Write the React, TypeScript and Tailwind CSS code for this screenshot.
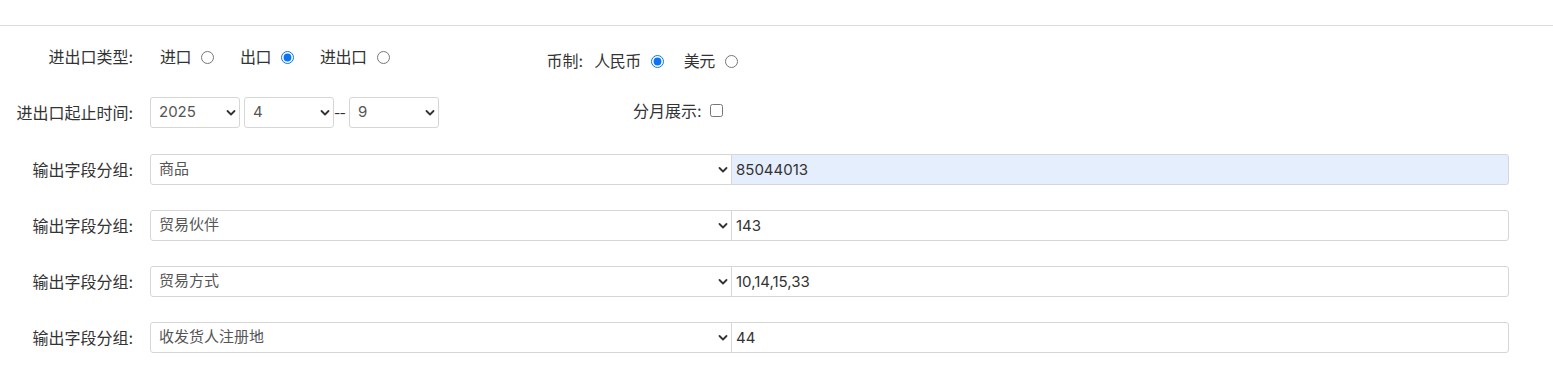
const font = "font-['Inter','Noto_Sans_CJK_SC',sans-serif]";

const Chevron = () => (
    <svg className="pointer-events-none absolute right-[4px] top-1/2 -translate-y-1/2" width="10" height="7" viewBox="0 0 10 7" fill="none">
        <path d="M1.5 1.5 L5 5 L8.5 1.5" stroke="#333" strokeWidth="1.8" strokeLinecap="round" strokeLinejoin="round" />
    </svg>
);

const Select = ({ value, className }: { value: string; className: string }) => (
    <div className={`relative h-[31px] shrink-0 ${className}`}>
        <select
            defaultValue={value}
            className="h-full w-full appearance-none rounded-l-[3px] border border-[#d6d6d6] bg-white pl-[8px] text-[15px] text-[#555] outline-none"
        >
            <option>{value}</option>
        </select>
        <Chevron />
    </div>
);

const Radio = ({ label, checked, gap }: { label: string; checked?: boolean; gap: string }) => (
    <label className={`flex items-center ${gap}`}>
        <span className="tracking-[-0.5px]">{label}</span>
        <input type="radio" defaultChecked={checked} name={label} className="m-0 ml-[10px] h-[13px] w-[13px] accent-[#0a74f5]" />
    </label>
);

const groups = [
    { name: '商品', value: '85044013', filled: true },
    { name: '贸易伙伴', value: '143' },
    { name: '贸易方式', value: '10,14,15,33' },
    { name: '收发货人注册地', value: '44' },
];

export default function App() {
    return (
        <div className={`min-h-[369px] w-full bg-white text-[16px] text-[#333] ${font}`}>
            <div className="h-[26px] border-b border-[#dcdcdc]" />

            {/* 类型 / 币制 */}
            <div className="mt-[20px] flex items-start">
                <div className="flex h-[22px] items-center">
                    <div className="w-[133px] text-right">进出口类型:</div>
                    <div className="ml-[27px] flex items-center">
                        <Radio label="进口" gap="" />
                        <Radio label="出口" checked gap="ml-[26px]" />
                        <Radio label="进出口" gap="ml-[26px]" />
                    </div>
                </div>
                <div className="ml-[157px] mt-[4px] flex h-[22px] items-center">
                    <span>币制:</span>
                    <div className="ml-[11px] flex items-center">
                        <Radio label="人民币" checked gap="" />
                        <Radio label="美元" gap="ml-[20px]" />
                    </div>
                </div>
            </div>

            {/* 起止时间 */}
            <div className="mt-[25px] flex h-[31px] items-center">
                <div className="w-[133px] text-right">进出口起止时间:</div>
                <div className="ml-[17px] flex items-center">
                    <Select value="2025" className="w-[90px] [&_select]:rounded-[3px]" />
                    <Select value="4" className="ml-[4px] w-[90px] [&_select]:rounded-[3px]" />
                    <span className="inline-block w-[10px] whitespace-nowrap text-[14px] tracking-[-1px] text-[#333]">--</span>
                    <Select value="9" className="ml-[5px] w-[90px] [&_select]:rounded-[3px]" />
                </div>
                <div className="ml-[194px] flex -translate-y-[2px] items-center">
                    <span>分月展示:</span>
                    <input type="checkbox" className="m-0 ml-[8px] h-[13px] w-[13px]" />
                </div>
            </div>

            {/* 输出字段分组 */}
            <div className="mt-[26px] flex flex-col gap-[25px]">
                {groups.map((g) => (
                    <div key={g.name} className="flex h-[31px] items-center">
                        <div className="w-[133px] text-right">输出字段分组:</div>
                        <div className="ml-[17px] flex">
                            <Select value={g.name} className="w-[582px]" />
                            <input
                                defaultValue={g.value}
                                className={`-ml-px h-[31px] w-[778px] rounded-r-[3px] border border-[#d6d6d6] px-[4px] text-[15px] text-[#333] outline-none ${g.filled ? 'bg-[#e5eefc]' : 'bg-white'}`}
                            />
                        </div>
                    </div>
                ))}
            </div>
        </div>
    );
}
